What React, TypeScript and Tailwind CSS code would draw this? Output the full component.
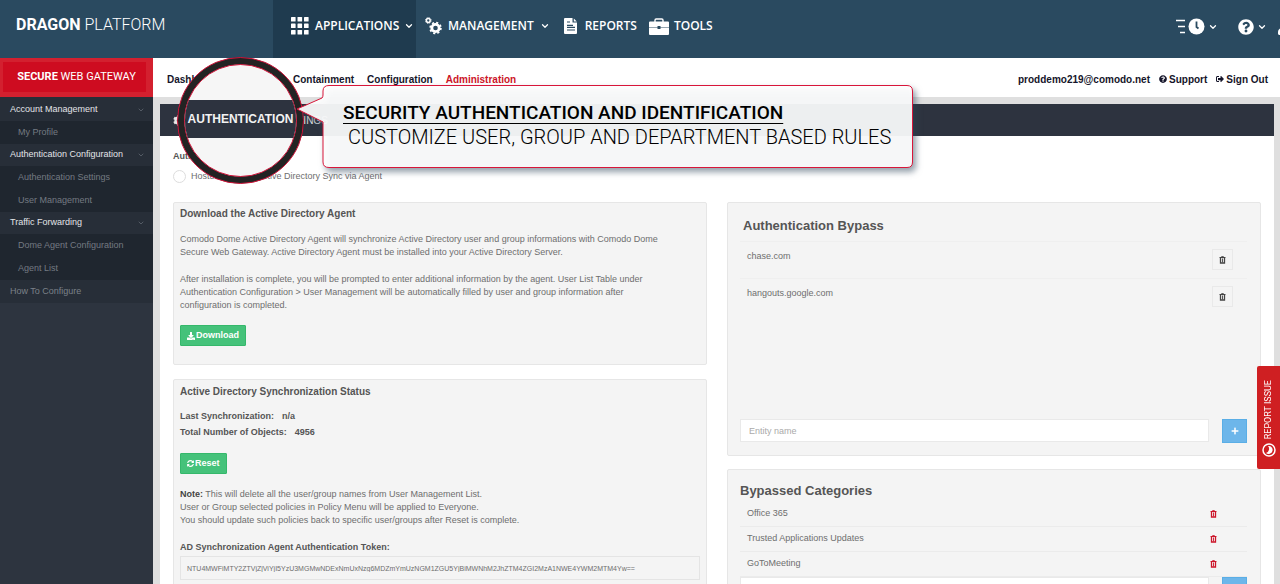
import React from "react";
import { ChevronDown } from "lucide-react";
import {
  FaCog,
  FaDownload,
  FaPlus,
  FaQuestionCircle,
  FaSyncAlt,
  FaSignOutAlt,
  FaUser,
} from "react-icons/fa";

const menu = [
  {
    title: "Account Management",
    items: ["My Profile"],
  },
  {
    title: "Authentication Configuration",
    items: ["Authentication Settings", "User Management"],
  },
  {
    title: "Traffic Forwarding",
    items: ["Dome Agent Configuration", "Agent List"],
  },
];

const bypassList = ["chase.com", "hangouts.google.com"];
const categories = ["Office 365", "Trusted Applications Updates", "GoToMeeting"];

const GridIcon = () => (
  <svg width="18" height="18" viewBox="0 0 18 18" fill="#fff">
    {[0, 6.5, 13].map((y) =>
      [0, 6.5, 13].map((x) => (
        <rect key={`${x}-${y}`} x={x} y={y} width="4.6" height="4.6" rx="0.6" />
      ))
    )}
  </svg>
);

// ring with stubby teeth, drawn with a dashed stroke
const CogsIcon = () => (
  <svg width="17" height="18" viewBox="0 0 17 18" fill="none" stroke="#fff">
    <circle cx="3.300" cy="3.500" r="1.900" strokeWidth="1.500" />
    <circle cx="3.300" cy="3.500" r="2.900" strokeWidth="0.900" strokeDasharray="1.140 1.140" />
    <circle cx="10.500" cy="11" r="3.700" strokeWidth="2.800" />
    <circle cx="10.500" cy="11" r="5.400" strokeWidth="1.700" strokeDasharray="2.120 2.120" />
  </svg>
);

const ReportIcon = () => (
  <svg width="14" height="16" viewBox="0 0 14 16">
    <path d="M1 0h7.5v4.5H13V15a1 1 0 0 1-1 1H1a1 1 0 0 1-1-1V1a1 1 0 0 1 1-1z" fill="#fff" />
    <path d="M9.8 0.4 12.8 3.4H9.8z" fill="#fff" />
    <path d="M3 4h3M3 7.3h6M3 9.3h8M3 12h8" stroke="#2a4a60" strokeWidth="1.2" />
  </svg>
);

const ToolboxIcon = () => (
  <svg width="20" height="17" viewBox="0 0 20 17">
    <path d="M6 4V2.2A1.2 1.2 0 0 1 7.2 1h5.6A1.2 1.2 0 0 1 14 2.2V4" fill="none" stroke="#fff" strokeWidth="1.4" />
    <path d="M1 3.500h18a1 1 0 0 1 1 1V9.500h-8.500V8h-3v1.500H0V4.500a1 1 0 0 1 1-1z" fill="#fff" />
    <path d="M0 10h8.500v1h3v-1H20v6a1 1 0 0 1-1 1H1a1 1 0 0 1-1-1z" fill="#fff" />
  </svg>
);

const HistoryIcon = () => (
  <svg width="29" height="17" viewBox="0 0 29 17">
    <path d="M0 2.500h9M2 8.500h7M4 14.500h5" stroke="#fff" strokeWidth="1.6" />
    <circle cx="20.5" cy="8.5" r="8" fill="#fff" />
    <path d="M20.500 3.500v5.500l2 1.500" fill="none" stroke="#2a4a60" strokeWidth="1.8" />
  </svg>
);

const TrashIcon = () => (
  <svg width="7" height="8" viewBox="0 0 7 8" fill="none" stroke="currentColor">
    <path d="M0.500 1.500h6M2.300 0.700h2.400" />
    <path d="M1.500 2v5h4V2" strokeWidth="1.3" />
    <path d="M3.500 2.500v4" strokeWidth="0.9" />
  </svg>
);

const Header = () => (
  <header className="flex h-[58px] shrink-0 items-center overflow-hidden bg-[#2a4a60] font-['Open_Sans',sans-serif] text-white">
    <div className="w-[273px] shrink-0 pb-2 pl-4 font-[Roboto,sans-serif] text-base">
      <b>DRAGON</b> <span className="font-light">PLATFORM</span>
    </div>
    <nav className="flex h-full items-center pb-[6px] text-[12px] font-semibold">
      <button className="-mb-[6px] flex h-[58px] w-[143px] items-center bg-[#1f3b4f] pb-[6px] pl-[18px]">
        <GridIcon />
        <span className="ml-[6px]">APPLICATIONS</span>
        <ChevronDown size={10} strokeWidth={3} className="ml-[5px]" />
      </button>
      <button className="ml-[9px] flex items-center">
        <CogsIcon />
        <span className="ml-[6px]">MANAGEMENT</span>
        <ChevronDown size={10} strokeWidth={3} className="ml-[6px]" />
      </button>
      <a href="#reports" className="ml-[14px] flex items-center">
        <ReportIcon />
        <span className="ml-[7px]">REPORTS</span>
      </a>
      <a href="#tools" className="ml-3 flex items-center">
        <ToolboxIcon />
        <span className="ml-[5px]">TOOLS</span>
      </a>
    </nav>
    <div className="ml-auto flex items-center pb-[5px]">
      <button aria-label="History" className="flex items-center">
        <HistoryIcon />
        <ChevronDown size={10} strokeWidth={3} className="ml-[3px]" />
      </button>
      <button aria-label="Help" className="ml-5 flex items-center">
        <FaQuestionCircle size={16} />
        <ChevronDown size={10} strokeWidth={3} className="ml-[3px]" />
      </button>
      <button aria-label="Profile" className="-mr-[13px] ml-[10px]">
        <FaUser size={16} />
      </button>
    </div>
  </header>
);

const Sidebar = () => (
  <aside className="w-[153px] shrink-0 bg-[#2d343f]">
    <div className="h-[39px] bg-[#d3202f] pb-[5px] pl-[3px] pr-[7px] pt-1">
      <div className="flex h-full items-center justify-center bg-[#ce0c20] pl-1 font-[Roboto,sans-serif] text-[11px] text-white">
        <span>
          <b>SECURE</b> WEB GATEWAY
        </span>
      </div>
    </div>
    <nav className="bg-[#272e38] pt-[2px]">
      {menu.map((group) => (
        <div key={group.title}>
          <button className="flex h-[22px] w-full items-center justify-between bg-[#272e38] pl-[10px] pr-2 text-[#e3e5e8]">
            {group.title}
            <ChevronDown size={8} className="text-[#6b727c]" />
          </button>
          {group.items.map((item) => (
            <a key={item} href="#item" className="flex h-[23px] items-center bg-[#1f262f] pl-[18px] text-[#747a82]">
              {item}
            </a>
          ))}
        </div>
      ))}
      <a href="#how-to" className="flex h-[23px] items-center bg-[#272e38] pl-[10px] text-[#7b8189]">
        How To Configure
      </a>
    </nav>
  </aside>
);

const TopNav = () => (
  <div className="flex h-[39px] shrink-0 items-center justify-between bg-white pl-[14px] pr-3 pt-[3px] text-[10px] font-bold text-[#15152a]">
    <nav className="flex gap-[13px]">
      <a href="#dashboard" className="w-[113px]">Dashboard</a>
      <a href="#containment">Containment</a>
      <a href="#configuration">Configuration</a>
      <a href="#administration" className="text-[#cc1529]">Administration</a>
    </nav>
    <div className="flex gap-[9px]">
      <span>proddemo219@comodo.net</span>
      <a href="#support" className="flex items-center gap-[2px]">
        <FaQuestionCircle size={8} /> Support
      </a>
      <a href="#signout" className="flex items-center gap-[2px]">
        <FaSignOutAlt size={8} /> Sign Out
      </a>
    </div>
  </div>
);

const well = "rounded-[2px] border border-[#e6e6e6] bg-[#f4f4f4]";
const greenBtn =
  "flex h-[21px] items-center gap-[1px] rounded-[1px] border border-[#35b86b] bg-[#45c27a] px-[6px] font-bold text-white";
const textInput =
  "h-[23px] flex-1 border border-[#e9e9e9] bg-white px-2 outline-none placeholder:text-[#aaa]";
const blueBtn =
  "flex h-6 w-[25px] items-center justify-center border border-[#5aaee6] bg-[#6db6ea] text-white";

const LeftColumn = () => (
  <div className="flex flex-col gap-[14px]">
    <section className={`${well} px-[6px] pb-[18px] pt-1 leading-[13px]`}>
      <h3 className="text-[10px] font-bold leading-[13px] text-[#555]">Download the Active Directory Agent</h3>
      <p className="mt-[13px] pr-6">
        Comodo Dome Active Directory Agent will synchronize Active Directory user and group informations with Comodo Dome
        Secure Web Gateway. Active Directory Agent must be installed into your Active Directory Server.
      </p>
      <p className="mt-[14px] pr-6">
        After installation is complete, you will be prompted to enter additional information by the agent. User List Table under
        Authentication Configuration &gt; User Management will be automatically filled by user and group information after
        configuration is completed.
      </p>
      <button className={`${greenBtn} mt-[13px]`}>
        <FaDownload size={8} /> Download
      </button>
    </section>
    <section className={`${well} px-[6px] pb-4 pt-[5px] leading-[13px]`}>
      <h3 className="text-[10px] font-bold leading-[13px] text-[#555]">Active Directory Synchronization Status</h3>
      <dl className="mt-[10px] font-bold leading-4 text-[#555]">
        <div className="flex gap-2">
          <dt>Last Synchronization:</dt>
          <dd>n/a</dd>
        </div>
        <div className="flex gap-2">
          <dt>Total Number of Objects:</dt>
          <dd>4956</dd>
        </div>
      </dl>
      <button className={`${greenBtn} mt-[13px]`}>
        <FaSyncAlt size={7} /> Reset
      </button>
      <p className="mt-[14px]">
        <b className="text-[#444]">Note:</b> This will delete all the user/group names from User Management List.
        <br />
        User or Group selected policies in Policy Menu will be applied to Everyone.
        <br />
        You should update such policies back to specific user/groups after Reset is complete.
      </p>
      <label htmlFor="token" className="mt-[14px] block font-bold text-[#555]">
        AD Synchronization Agent Authentication Token:
      </label>
      <input
        id="token"
        readOnly
        className="mt-[2px] h-6 w-full border border-[#e4e4e4] bg-[#f4f4f4] px-[6px] text-[7px] outline-none"
        value="NTU4MWFiMTY2ZTVjZjViYjI5YzU3MGMwNDExNmUxNzg6MDZmYmUzNGM1ZGU5YjBiMWNhM2JhZTM4ZGI2MzA1NWE4YWM2MTM4Yw=="
      />
    </section>
  </div>
);

const RightColumn = () => (
  <div className="flex flex-col gap-[13px]">
    <section className={`${well} flex h-[254px] flex-col pb-3 pl-3 pr-[13px] pt-[13px]`}>
      <h2 className="pl-[3px] text-[13px] font-bold leading-5 text-[#555]">Authentication Bypass</h2>
      <ul className="mt-[5px] flex-1">
        {bypassList.map((host) => (
          <li key={host} className="flex h-[37px] justify-between border-t border-[#efefef] pl-[7px] pr-[14px] pt-[7px]">
            <span className="pt-[1px]">{host}</span>
            <button aria-label="Delete" className="flex h-[21px] w-[21px] items-center justify-center border border-[#e9e9e9] text-[#444]">
              <TrashIcon />
            </button>
          </li>
        ))}
      </ul>
      <div className="flex gap-[13px]">
        <input aria-label="Entity name" placeholder="Entity name" className={textInput} />
        <button aria-label="Add entity" className={blueBtn}>
          <FaPlus size={8} />
        </button>
      </div>
    </section>
    <section className={`${well} pb-3 pl-3 pr-[13px] pt-[11px]`}>
      <h2 className="text-[13px] font-bold leading-5 text-[#555]">Bypassed Categories</h2>
      <ul className="pt-[1px]">
        {categories.map((name) => (
          <li key={name} className="flex h-[25px] items-center justify-between border-b border-[#ebebeb] pl-[7px] pr-[30px]">
            {name}
            <button aria-label="Remove" className="text-[#cc1529]">
              <TrashIcon />
            </button>
          </li>
        ))}
      </ul>
      <div className="flex gap-[13px]">
        <input aria-label="Choose category" placeholder="Choose category" className={textInput} />
        <button aria-label="Add category" className={blueBtn}>
          <FaPlus size={8} />
        </button>
      </div>
    </section>
  </div>
);

// round lens over the page title
const Magnifier = () => (
  <div className="absolute left-[177px] top-[57px] h-[127px] w-[127px] rounded-full border border-[#cf1238] bg-[#232323] p-[6px]">
    <div className="flex h-full w-full flex-col justify-center overflow-hidden rounded-full border border-[#cf1238] bg-[#f6f6f6] pb-1">
      <div className="flex h-[38px] items-center justify-center whitespace-nowrap bg-[#2d333f] text-[12px] font-bold text-[#f2f2f2]">
        AUTHENTICATION
      </div>
    </div>
  </div>
);

const Callout = () => (
  <div className="absolute left-[296px] top-[85px] h-[83px] w-[618px] whitespace-nowrap pl-[47px] pt-4 font-[Roboto,sans-serif] leading-6 text-black">
    <svg className="absolute left-0 top-0 overflow-visible drop-shadow-[3px_4px_3px_rgba(42,66,88,0.55)]" width="618" height="83" viewBox="0 0 618 83">
      <path
        d="M1 24 26 13Q27 12 27 10V6Q27 0.500 33 0.500H611Q616.500 0.500 616.500 6V77Q616.500 82.500 611 82.500H33Q27 82.500 27 77V37z"
        fill="#fff"
        fillOpacity="0.92"
        stroke="#d8163a"
      />
    </svg>
    <p className="relative text-[19px] font-medium leading-6 underline decoration-1 underline-offset-4">
      SECURITY AUTHENTICATION AND IDENTIFICATION
    </p>
    <p className="relative pl-[5px] text-[20px] font-light leading-6">CUSTOMIZE USER, GROUP AND DEPARTMENT BASED RULES</p>
  </div>
);

const ReportIssue = () => (
  <button className="absolute right-0 top-[366px] flex h-[103px] w-[23px] flex-col items-center justify-end gap-1 rounded-l-[2px] bg-[#cf1f22] pb-3 font-[Roboto,sans-serif] text-[9px] text-white">
    <span className="rotate-180 [writing-mode:vertical-rl]">REPORT ISSUE</span>
    <svg width="14" height="14" viewBox="0 0 14 14">
      <circle cx="7" cy="7" r="6" fill="none" stroke="#fff" strokeWidth="1.5" />
      <path d="M6 3a4 4 0 1 1-2 7 4.300 4.300 0 0 0 2-7z" fill="#fff" />
    </svg>
  </button>
);

const App = () => {
  return (
    <div className="relative flex h-screen flex-col overflow-hidden bg-white font-['Liberation_Sans',Arial,sans-serif] text-[9px] text-[#6e6e6e]">
      <Header />
      <div className="flex min-h-0 flex-1">
        <Sidebar />
        <div className="flex min-w-0 flex-1 flex-col">
          <TopNav />
          <div className="min-h-0 flex-1 bg-[#dfdfdf] pl-[7px] pr-[6px] pt-[7px]">
            <main className="min-h-full bg-white">
              <h1 className="flex h-8 items-center gap-1 bg-[#2d333f] pl-[13px] text-[10px] text-[#e8e8e8]">
                <FaCog size={11} /> AUTHENTICATION SETTINGS
              </h1>
              <fieldset className="px-[13px] pt-[14px]">
                <div className="font-bold leading-[13px] text-[#555]">Authentication</div>
                <div className="mt-[7px] flex items-center leading-[13px]">
                  <input id="hosted" name="source" type="radio" className="h-[13px] w-[13px] appearance-none rounded-full border border-[#ddd]" />
                  <label htmlFor="hosted" className="ml-[5px] w-[48px]">Hosted</label>
                  <input id="sync" name="source" type="radio" className="h-[13px] w-[13px] appearance-none rounded-full border border-[#ddd]" />
                  <label htmlFor="sync" className="ml-[5px]">Active Directory Sync via Agent</label>
                </div>
              </fieldset>
              <div className="grid grid-cols-2 gap-5 px-[13px] pt-[19px]">
                <LeftColumn />
                <RightColumn />
              </div>
            </main>
          </div>
        </div>
      </div>
      <Magnifier />
      <Callout />
      <ReportIssue />
    </div>
  );
};

export default App;
